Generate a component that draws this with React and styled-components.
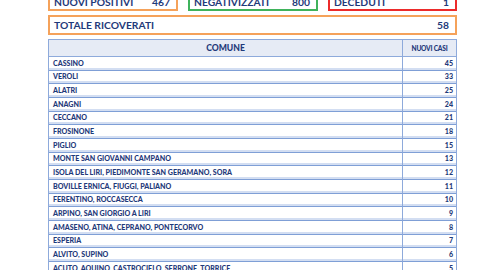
import React from 'react'
import styled, { createGlobalStyle } from 'styled-components'

const GlobalStyle = createGlobalStyle`
	html, body {
		margin: 0;
		padding: 0;
		background: #ffffff;
		overflow: hidden;
	}
	body {
		font-family: Lato, "Open Sans", sans-serif;
		color: #1f3a7a;
	}
`

const Page = styled.div`
	width: 409px;
	margin: -8px 0 0 48px;
	display: flex;
	flex-direction: column;
	gap: 4px;
`

const StatRow = styled.div`
	display: grid;
	grid-template-columns: 130px 130px 129px;
	gap: 10px;
`

const StatBox = styled.div`
	height: 19px;
	box-sizing: border-box;
	border: 2px solid ${({ color }) => color};
	display: flex;
	align-items: center;
	justify-content: space-between;
	padding: 1px 6px 0 4px;
	font-size: 10.3px;
	font-weight: 700;
`

const TotalBox = styled(StatBox)`
	height: 19.5px;
	padding-right: 6px;
`

const Table = styled.div`
	border: 1px solid #8eaadb;
	display: grid;
	grid-template-columns: 1fr 54px;
`

const HeadCell = styled.div`
	height: 16.5px;
	background: #e6ebf5;
	border-bottom: 1px solid #8eaadb;
	border-left: ${({ last }) => last ? '1px solid #8eaadb' : '0'};
	display: flex;
	align-items: center;
	justify-content: center;
	font-weight: 900;
	font-size: ${({ small }) => small ? '6.6px' : '8.6px'};
	letter-spacing: ${({ small }) => small ? '-0.2px' : '0'};
	white-space: nowrap;
`

const Cell = styled.div`
	height: 13.67px;
	box-sizing: border-box;
	border-bottom: 1px solid #7f9fd6;
	box-shadow: inset 0 -2px 0 #d3def2;
	border-left: ${({ num }) => num ? '1px solid #8eaadb' : '0'};
	display: flex;
	align-items: center;
	justify-content: ${({ num }) => num ? 'flex-end' : 'flex-start'};
	padding: ${({ num }) => num ? '0 3px 0 0' : '0 0 0 4px'};
	font-size: 7.1px;
	font-weight: 900;
	white-space: nowrap;
`

const stats = [
	{ label: 'NUOVI POSITIVI', value: 467, color: '#f5a25a' },
	{ label: 'NEGATIVIZZATI', value: 800, color: '#3fb35c' },
	{ label: 'DECEDUTI', value: 1, color: '#ec2b2b' },
]

const rows = [
	['CASSINO', 45],
	['VEROLI', 33],
	['ALATRI', 25],
	['ANAGNI', 24],
	['CECCANO', 21],
	['FROSINONE', 18],
	['PIGLIO', 15],
	['MONTE SAN GIOVANNI CAMPANO', 13],
	['ISOLA DEL LIRI, PIEDIMONTE SAN GERAMANO, SORA', 12],
	['BOVILLE ERNICA, FIUGGI, PALIANO', 11],
	['FERENTINO, ROCCASECCA', 10],
	['ARPINO, SAN GIORGIO A LIRI', 9],
	['AMASENO, ATINA, CEPRANO, PONTECORVO', 8],
	['ESPERIA', 7],
	['ALVITO, SUPINO', 6],
	['ACUTO, AQUINO, CASTROCIELO, SERRONE, TORRICE', 5],
]

const App = () => (
	<>
		<GlobalStyle />
		<Page>
			<StatRow>
				{stats.map(stat => (
					<StatBox key={stat.label} color={stat.color}>
						<span>{stat.label}</span>
						<span>{stat.value}</span>
					</StatBox>
				))}
			</StatRow>
			<TotalBox color="#f5a25a">
				<span>TOTALE RICOVERATI</span>
				<span>58</span>
			</TotalBox>
			<Table>
				<HeadCell>COMUNE</HeadCell>
				<HeadCell last small>NUOVI CASI</HeadCell>
				{rows.map(([name, cases]) => (
					<React.Fragment key={name}>
						<Cell>{name}</Cell>
						<Cell num>{cases}</Cell>
					</React.Fragment>
				))}
			</Table>
		</Page>
	</>
)

export default App
